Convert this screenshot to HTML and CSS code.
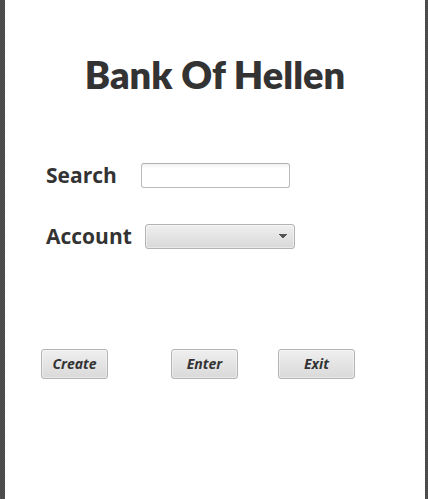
FILE: index.html
```
<!DOCTYPE html>
<html lang="en">
<head>
<meta charset="utf-8">
<meta name="viewport" content="width=device-width, initial-scale=1">
<title>Bank Of Hellen</title>
<link rel="stylesheet" href="styles.css">
</head>
<body>
<main class="window">
  <h1 class="title">Bank Of Hellen</h1>
  <form class="form">
    <div class="row row-search">
      <label class="label" for="search">Search</label>
      <input class="field" id="search" type="text">
    </div>
    <div class="row row-account">
      <label class="label" for="account">Account</label>
      <select class="field picker" id="account"><option></option></select>
    </div>
    <div class="actions">
      <button class="button create" type="button">Create</button>
      <button class="button enter" type="button">Enter</button>
      <button class="button exit" type="button">Exit</button>
    </div>
  </form>
</main>
</body>
</html>
```
FILE: styles.css
```
* {
  box-sizing: border-box;
}

body {
  margin: 0;
  padding: 0 3px 0 5px;
  background: repeating-conic-gradient(#464646 0 25%, #525252 0 50%) 0 0 / 2px 2px;
  color: #333;
  font-family: "Open Sans", "Noto Sans", sans-serif;
}

.window {
  min-height: 100vh;
  padding: 48px 36px 0;
  background: #fff;
}

.title {
  margin: 0;
  font-family: Lato, "Open Sans", sans-serif;
  font-size: 38px;
  line-height: 52px;
  font-weight: 800;
  text-align: center;
  white-space: nowrap;
}

.form {
  margin-top: 57px;
}

.row {
  display: flex;
  align-items: center;
  height: 36px;
  padding-left: 5px;
}

.row + .row {
  margin-top: 25px;
}

.label {
  font-size: 21px;
  line-height: 32px;
  font-weight: 700;
}

.row-search .label {
  width: 95px;
}

.row-account .label {
  width: 99px;
}

.field {
  width: 149px;
  height: 25px;
  margin: 0;
  padding: 0 8px;
  border: 1px solid #bababa;
  border-top-color: #b0b0b0;
  border-radius: 3px;
  background: linear-gradient(#f2f2f2, #fff 5px);
  color: #333;
  font: 12px "Open Sans", sans-serif;
}

.picker {
  width: 150px;
  appearance: none;
  border-color: #b4b4b4;
  background:
    conic-gradient(from 315deg at 50% 100%, #555 90deg, transparent 0) right 7px center / 8px 4px no-repeat,
    linear-gradient(#efefef, #d9d9d9);
  box-shadow: inset 0 0 0 1px rgba(255, 255, 255, 0.4);
}

.actions {
  display: flex;
  margin-top: 95px;
}

.button {
  width: 67px;
  height: 30px;
  padding: 0;
  border: 1px solid #b4b4b4;
  border-radius: 3px;
  background: linear-gradient(#efefef, #d9d9d9);
  box-shadow: inset 0 0 0 1px rgba(255, 255, 255, 0.4);
  color: #333;
  font: italic 700 14px/20px "Open Sans", "Noto Sans", sans-serif;
}

.enter {
  margin-left: 63px;
}

.exit {
  width: 77px;
  margin-left: 40px;
}
```
